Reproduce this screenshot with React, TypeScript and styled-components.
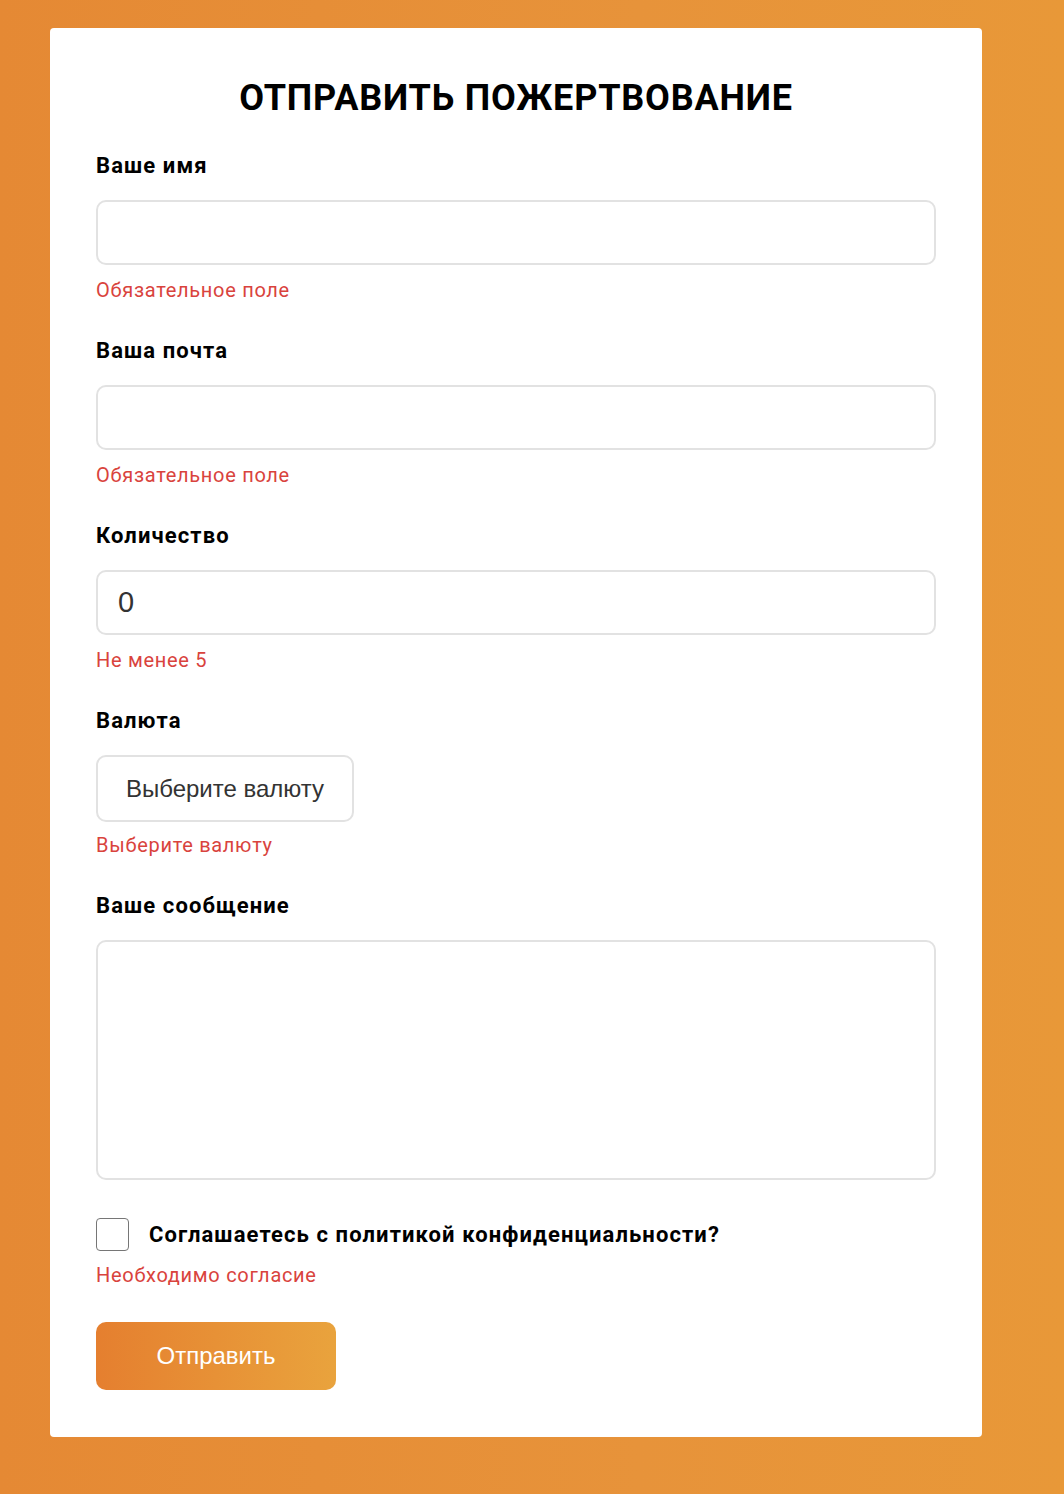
import React from "react";
import styled, { createGlobalStyle } from "styled-components";

const GlobalStyle = createGlobalStyle`
  html, body { margin: 0; padding: 0; }
  body {
    min-height: 1494px;
    background: linear-gradient(90deg, #e58934 0%, #e7933a 60%, #e89838 100%);
    font-family: Roboto, "Noto Sans", sans-serif;
  }
  * { box-sizing: border-box; }
`;

const Page = styled.div`
  padding: 28px 82px 58px 50px;
`;

const Card = styled.form`
  background: #ffffff;
  border-radius: 4px;
  padding: 0 46px 47px;
  display: flex;
  flex-direction: column;
`;

const Title = styled.h1`
  margin: 0;
  padding-top: 70px;
  height: 126px;
  line-height: 0;
  font-family: Roboto, sans-serif;
  font-weight: 700;
  font-size: 36px;
  letter-spacing: 0.8px;
  text-align: center;
  color: #000;
`;

const Group = styled.div<{ $gap?: number }>`
  display: flex;
  flex-direction: column;
  margin-bottom: ${(p) => (p.$gap ?? 37)}px;
`;

const Label = styled.label`
  font-family: Roboto, sans-serif;
  font-weight: 700;
  font-size: 22px;
  letter-spacing: 1.1px;
  line-height: 24px;
  color: #000;
  margin-bottom: 22px;
`;

const TextInput = styled.input`
  width: 100%;
  height: 65px;
  border: 2px solid #e2e2e2;
  border-radius: 10px;
  padding: 0 20px;
  font-family: "Liberation Sans", Arial, sans-serif;
  font-size: 29px;
  color: #333;
  outline: none;
  background: #fff;
`;

const TextArea = styled.textarea`
  width: 100%;
  height: 240px;
  border: 2px solid #e2e2e2;
  border-radius: 10px;
  padding: 16px 20px;
  font-family: "Liberation Sans", Arial, sans-serif;
  font-size: 24px;
  resize: none;
  outline: none;
`;

const SelectButton = styled.button`
  align-self: flex-start;
  width: 258px;
  height: 67px;
  border: 2px solid #e2e2e2;
  border-radius: 10px;
  background: #fff;
  font-family: "Liberation Sans", Arial, sans-serif;
  font-size: 24px;
  color: #333;
  padding: 0;
  cursor: pointer;
`;

const ErrorText = styled.div<{ $top?: number }>`
  font-family: Roboto, sans-serif;
  font-size: 20px;
  letter-spacing: 0.7px;
  line-height: 24px;
  color: #d9433d;
  margin-top: ${(p) => (p.$top ?? 13)}px;
`;

const CheckRow = styled.label`
  display: flex;
  align-items: center;
  gap: 20px;
  height: 33px;
`;

const CheckBox = styled.span`
  width: 33px;
  height: 33px;
  border: 1px solid #767676;
  border-radius: 4px;
  background: #fff;
  flex-shrink: 0;
`;

const CheckText = styled.span`
  font-family: Roboto, sans-serif;
  font-weight: 700;
  font-size: 22px;
  letter-spacing: 1.1px;
  color: #000;
`;

const SubmitButton = styled.button`
  align-self: flex-start;
  margin-top: 35px;
  width: 240px;
  height: 68px;
  border: none;
  border-radius: 10px;
  background: linear-gradient(90deg, #e57f2f 0%, #e9a33d 100%);
  color: #fff;
  font-family: "Liberation Sans", Arial, sans-serif;
  font-size: 24px;
  cursor: pointer;
`;

export default function App() {
  return (
    <>
      <GlobalStyle />
      <Page>
        <Card onSubmit={(e) => e.preventDefault()}>
          <Title>ОТПРАВИТЬ ПОЖЕРТВОВАНИЕ</Title>
          <Group>
            <Label>Ваше имя</Label>
            <TextInput type="text" />
            <ErrorText>Обязательное поле</ErrorText>
          </Group>
          <Group>
            <Label>Ваша почта</Label>
            <TextInput type="email" />
            <ErrorText>Обязательное поле</ErrorText>
          </Group>
          <Group>
            <Label>Количество</Label>
            <TextInput type="text" defaultValue="0" />
            <ErrorText>Не менее 5</ErrorText>
          </Group>
          <Group>
            <Label>Валюта</Label>
            <SelectButton type="button">Выберите валюту</SelectButton>
            <ErrorText $top={11}>Выберите валюту</ErrorText>
          </Group>
          <Group $gap={38}>
            <Label>Ваше сообщение</Label>
            <TextArea />
          </Group>
          <CheckRow>
            <CheckBox />
            <CheckText>Соглашаетесь с политикой конфиденциальности?</CheckText>
          </CheckRow>
          <ErrorText $top={12}>Необходимо согласие</ErrorText>
          <SubmitButton type="submit">Отправить</SubmitButton>
        </Card>
      </Page>
    </>
  );
}
